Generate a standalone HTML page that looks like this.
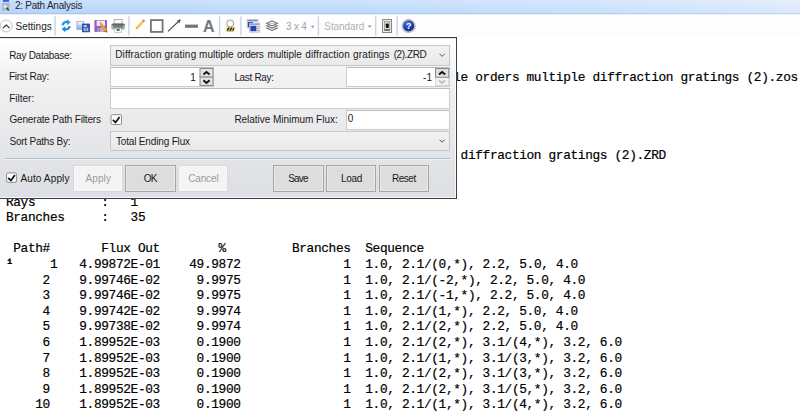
<!DOCTYPE html>
<html><head><meta charset="utf-8"><title>2: Path Analysis</title>
<style>
html,body{margin:0;padding:0;}
body{width:800px;height:412px;overflow:hidden;background:#fff;position:relative;font-family:"Liberation Sans",sans-serif;font-size:10px;color:#1a1a1a;}
.abs{position:absolute;}
#title{position:absolute;left:0;top:0;width:800px;height:15px;background:linear-gradient(to bottom,rgba(255,255,255,.27) 0,rgba(255,255,255,0) 12.5px),linear-gradient(to right,#b7d5fc 0,#b9d7fc 20%,#bedafd 50%,#c8e0fd 75%,#d6e6fc 94%,#dbe9fc 100%);}
#title i{position:absolute;left:0;width:800px;height:1px;}
#toolbar{position:absolute;left:0;top:15px;width:800px;height:22px;background:linear-gradient(#fff,#fcfcfc);}
.sep{position:absolute;top:17px;width:1px;height:18px;background:#c3d3e6;}
#mono{position:absolute;left:-1.4px;top:38.7px;-webkit-text-stroke:0.2px #000;margin:0;font-family:"Liberation Mono",monospace;font-size:12.8px;letter-spacing:-0.347px;line-height:15.6px;color:#000;white-space:pre;}
#panel{position:absolute;left:-1px;top:37px;width:456px;height:160px;border:1px solid #3c3c3c;box-sizing:content-box;background:linear-gradient(#ffffff 0,#fdfdfd 4%,#f2f2f3 24%,#ebebed 51%,#dfe1e5 87%,#dcdfe3 100%);}
#panel .in{position:absolute;left:0;top:0;right:0;bottom:0;border:1px solid rgba(255,255,255,.75);border-left:0;}
.lbl{position:absolute;white-space:nowrap;font-size:10px;line-height:12px;color:#1a1a1a;}
.box{position:absolute;box-sizing:border-box;background:#fff;border:1px solid #c9cdd2;border-top-color:#b9bdc2;}
.combo{position:absolute;box-sizing:border-box;border:1px solid #c6c6c6;background:linear-gradient(#f2f2f2,#e9e9e9);}
.btn{position:absolute;box-sizing:border-box;top:165px;height:27px;border:1px solid #a6a6a6;background:#dddddd;box-shadow:inset 0 0 0 1px rgba(255,255,255,.35);}
.btn.dis{border-color:#d9d9d9;background:#f4f4f4;}
</style></head><body>
<pre id="mono">


                                    Diffraction grating multiple orders multiple diffraction gratings (2).zos




                  Diffraction grating multiple orders multiple diffraction gratings (2).ZRD


 Rays         :   1
 Branches     :   35

  Path#       Flux Out        %         Branches  Sequence
 <b>¹</b>     1   4.99872E-01    49.9872              1  1.0, 2.1/(0,*), 2.2, 5.0, 4.0
      2    9.99746E-02     9.9975              1  1.0, 2.1/(-2,*), 2.2, 5.0, 4.0
      3    9.99746E-02     9.9975              1  1.0, 2.1/(-1,*), 2.2, 5.0, 4.0
      4    9.99742E-02     9.9974              1  1.0, 2.1/(1,*), 2.2, 5.0, 4.0
      5    9.99738E-02     9.9974              1  1.0, 2.1/(2,*), 2.2, 5.0, 4.0
      6    1.89952E-03     0.1900              1  1.0, 2.1/(2,*), 3.1/(4,*), 3.2, 6.0
      7    1.89952E-03     0.1900              1  1.0, 2.1/(1,*), 3.1/(3,*), 3.2, 6.0
      8    1.89952E-03     0.1900              1  1.0, 2.1/(2,*), 3.1/(3,*), 3.2, 6.0
      9    1.89952E-03     0.1900              1  1.0, 2.1/(2,*), 3.1/(5,*), 3.2, 6.0
     10    1.89952E-03     0.1900              1  1.0, 2.1/(1,*), 3.1/(4,*), 3.2, 6.0</pre>
<div id="title"><i style="top:13px;background:rgba(110,140,170,.20)"></i><i style="top:14px;background:rgba(240,243,247,.86)"></i></div>
<div id="toolbar"></div>
<div id="panel"><div class="in"></div><div class="abs" style="left:0;top:0;width:456px;height:1px;background:rgba(0,0,0,.1)"></div></div>
<div class="combo" style="left:110px;top:45px;width:340px;height:21px"></div>
<div class="box" style="left:110px;top:67px;width:104px;height:20px"></div>
<div class="box" style="left:346px;top:67px;width:104px;height:20px"></div>
<div class="box" style="left:110px;top:88px;width:340px;height:21px"></div>
<div class="box" style="left:346px;top:110px;width:104px;height:20px"></div>
<div class="combo" style="left:110px;top:131px;width:340px;height:20px"></div>
<div class="abs" style="left:5px;top:158px;width:445px;height:1px;background:#a8bdd1"></div>
<div class="abs" style="left:5px;top:159px;width:445px;height:1px;background:rgba(255,255,255,.5)"></div>
<div class="btn dis" style="left:73px;width:50px"></div>
<div class="btn" style="left:125px;width:51px"></div>
<div class="btn dis" style="left:178px;width:50px"></div>
<div class="btn" style="left:273px;width:51px"></div>
<div class="btn" style="left:326px;width:50px"></div>
<div class="btn" style="left:379px;width:50px"></div>
<span class="lbl" style="left:14.90px;top:0.00px;letter-spacing:-0.234px;color:#1e2430;">2: Path Analysis</span>
<span class="lbl" style="left:15.45px;top:21.00px;letter-spacing:0.024px;">Settings</span>
<span class="lbl" style="left:286.05px;top:21.00px;letter-spacing:-0.242px;color:#a3a3a3;">3 x 4</span>
<span class="lbl" style="left:324.35px;top:21.00px;letter-spacing:-0.103px;color:#b0b0b0;">Standard</span>
<span class="lbl" style="left:9.15px;top:50.00px;letter-spacing:-0.268px;">Ray Database:</span>
<span class="lbl" style="left:9.00px;top:71.00px;letter-spacing:-0.278px;">First Ray:</span>
<span class="lbl" style="left:9.20px;top:93.00px;letter-spacing:-0.004px;">Filter:</span>
<span class="lbl" style="left:9.50px;top:114.00px;letter-spacing:-0.180px;">Generate Path Filters</span>
<span class="lbl" style="left:9.45px;top:136.00px;letter-spacing:-0.222px;">Sort Paths By:</span>
<span class="lbl" style="left:115.15px;top:49.00px;letter-spacing:0.163px;">Diffraction</span>
<span class="lbl" style="left:164.40px;top:49.00px;letter-spacing:0.206px;">grating</span>
<span class="lbl" style="left:199.05px;top:49.00px;letter-spacing:0.015px;">multiple</span>
<span class="lbl" style="left:237.10px;top:49.00px;letter-spacing:-0.339px;">orders</span>
<span class="lbl" style="left:267.45px;top:49.00px;letter-spacing:-0.014px;">multiple</span>
<span class="lbl" style="left:305.30px;top:49.00px;letter-spacing:0.134px;">diffraction</span>
<span class="lbl" style="left:353.10px;top:49.00px;letter-spacing:0.125px;">gratings</span>
<span class="lbl" style="left:393.70px;top:49.00px;letter-spacing:-0.430px;">(2).ZRD</span>
<span class="lbl" style="left:190.20px;top:72.00px;">1</span>
<span class="lbl" style="left:234.40px;top:72.00px;letter-spacing:-0.333px;">Last Ray:</span>
<span class="lbl" style="left:423.07px;top:72.00px;">-1</span>
<span class="lbl" style="left:234.40px;top:114.00px;letter-spacing:-0.030px;">Relative Minimum Flux:</span>
<span class="lbl" style="left:347.85px;top:113.00px;">0</span>
<span class="lbl" style="left:115.90px;top:136.00px;letter-spacing:-0.157px;">Total Ending Flux</span>
<span class="lbl" style="left:20.40px;top:173.00px;letter-spacing:0.137px;">Auto Apply</span>
<span class="lbl" style="left:85.40px;top:173.00px;letter-spacing:0.146px;color:#9a9a9a;">Apply</span>
<span class="lbl" style="left:143.85px;top:173.00px;letter-spacing:-0.928px;">OK</span>
<span class="lbl" style="left:188.20px;top:173.00px;letter-spacing:-0.141px;color:#9a9a9a;">Cancel</span>
<span class="lbl" style="left:288.25px;top:173.00px;letter-spacing:-0.810px;">Save</span>
<span class="lbl" style="left:341.00px;top:173.00px;letter-spacing:-0.278px;">Load</span>
<span class="lbl" style="left:392.00px;top:173.00px;letter-spacing:-0.474px;">Reset</span>
<svg id="gfx" class="abs" style="left:0;top:0;pointer-events:none" width="800" height="412" viewBox="0 0 800 412">
<!-- separators -->
<rect x="54.40" y="16.4" width="1.4" height="19" fill="#c6d4e6"/>
<rect x="128.20" y="16.4" width="1.4" height="19" fill="#c6d4e6"/>
<rect x="218.90" y="16.4" width="1.4" height="19" fill="#c6d4e6"/>
<rect x="240.20" y="16.4" width="1.4" height="19" fill="#c6d4e6"/>
<rect x="317.70" y="16.4" width="1.4" height="19" fill="#c6d4e6"/>
<rect x="375.00" y="16.4" width="1.4" height="19" fill="#c6d4e6"/>
<rect x="396.50" y="16.4" width="1.4" height="19" fill="#c6d4e6"/>
<!-- settings circle -->
<circle cx="6.3" cy="25.95" r="5.95" fill="#fff" stroke="#bcbcbc" stroke-width="0.9"/>
<path d="M3.3 27.8 L6.25 24.95 L9.2 27.8" fill="none" stroke="#4a4a4a" stroke-width="1.25" stroke-linecap="round" stroke-linejoin="round"/>
<!-- checkboxes -->
<rect x="111" y="114.7" width="10.5" height="9.8" rx="1.3" fill="#fff" stroke="#8c8c8c" stroke-width="1"/>
<path d="M112.9 119.8 L115.5 122.4 L119.6 116.9" fill="none" stroke="#111" stroke-width="1.7" stroke-linejoin="miter"/>
<rect x="6.6" y="172.9" width="9.8" height="9.4" rx="1.3" fill="#fff" stroke="#8c8c8c" stroke-width="1"/>
<path d="M8.2 178 L11 180.5 L14.9 174.9" fill="none" stroke="#111" stroke-width="1.7" stroke-linejoin="miter"/>
<!-- spinner 1 -->
<rect x="200" y="68.5" width="13" height="8.6" fill="#e4e4e4" stroke="#8c8c8c" stroke-width="1"/>
<rect x="200" y="77.1" width="13" height="8.4" fill="#e4e4e4" stroke="#8c8c8c" stroke-width="1"/>
<path d="M203.4 74.6 L206.5 72 L209.6 74.6" fill="none" stroke="#111" stroke-width="1.9"/>
<path d="M203.4 80.3 L206.5 83 L209.6 80.3" fill="none" stroke="#111" stroke-width="1.9"/>
<!-- spinner 2 -->
<rect x="435.5" y="77.3" width="13.2" height="8.2" fill="#f3f3f3" stroke="#d9d9d9" stroke-width="1"/>
<rect x="435.5" y="68.5" width="13.2" height="8.8" fill="#dedede" stroke="#8c8c8c" stroke-width="1"/>
<path d="M439 74.6 L442.1 72 L445.2 74.6" fill="none" stroke="#111" stroke-width="1.9"/>
<path d="M439 80.3 L442.1 83 L445.2 80.3" fill="none" stroke="#bdbdbd" stroke-width="1.7"/>
<!-- combo arrows -->
<path d="M439.5 53.8 L442.1 56.4 L444.7 53.8" fill="none" stroke="#555" stroke-width="1"/>
<path d="M439.5 139.6 L442.1 142.2 L444.7 139.6" fill="none" stroke="#555" stroke-width="1"/>
<!--ICONS_START-->
<defs>
<linearGradient id="gBlue" x1="0" y1="0" x2="0" y2="1"><stop offset="0" stop-color="#4db4f7"/><stop offset="1" stop-color="#1580dc"/></linearGradient>
<linearGradient id="gPrn" x1="0" y1="0" x2="0" y2="1"><stop offset="0" stop-color="#5a5a5a"/><stop offset="1" stop-color="#a2a2a2"/></linearGradient>
<radialGradient id="gHelp" cx="0.4" cy="0.3" r="0.8"><stop offset="0" stop-color="#4a78e0"/><stop offset="0.6" stop-color="#1a3cae"/><stop offset="1" stop-color="#0c2480"/></radialGradient>
<linearGradient id="gDoc" x1="0" y1="0" x2="0" y2="1"><stop offset="0" stop-color="#ffffff"/><stop offset="1" stop-color="#6fa6ea"/></linearGradient>
</defs>
<!-- title icon -->
<rect x="2.9" y="0" width="6.1" height="1.8" fill="#3350ff"/>
<rect x="2.2" y="3" width="7.3" height="7.7" fill="#b4b4b4"/>
<circle cx="5.2" cy="6.5" r="1.7" fill="#d8e8ee"/>
<path d="M6.5 7.8 L8.8 10.2" stroke="#3a3a3a" stroke-width="1.4"/>
<!-- refresh -->
<g id="rf">
<path d="M62.7 25.3 C62.9 22.6 65.2 21.7 67.6 22" fill="none" stroke="#2795ea" stroke-width="2.3"/>
<path d="M67 19.2 L70.7 22.3 L67 25.2 Z" fill="#2795ea"/>
</g>
<g transform="rotate(180 66.15 25.7)">
<path d="M62.7 25.3 C62.9 22.6 65.2 21.7 67.6 22" fill="none" stroke="#1c86e0" stroke-width="2.3"/>
<path d="M67 19.2 L70.7 22.3 L67 25.2 Z" fill="#1c86e0"/>
</g>
<!-- copy -->
<rect x="76.9" y="21.6" width="6.8" height="7.8" fill="url(#gDoc)" stroke="#a9b4c4" stroke-width="0.9"/>
<rect x="82.4" y="24" width="7" height="7.8" fill="#2c4fb4" stroke="#20409c" stroke-width="0.8"/>
<rect x="83.6" y="25.2" width="3.2" height="1.6" fill="#dfe8fa"/>
<rect x="83.6" y="27.8" width="4.6" height="3.2" fill="#b4c8f0"/>
<path d="M85.1 27.8 V31 M86.7 27.8 V31" stroke="#2c4fb4" stroke-width="0.6"/>
<!-- save -->
<rect x="94.4" y="20" width="12.6" height="12" rx="0.8" fill="#9a5cc4"/>
<rect x="96.6" y="20.6" width="8.4" height="5.3" fill="#efe9f8"/>
<rect x="97.4" y="27.8" width="6.4" height="4.2" fill="#b9aecb"/>
<rect x="98.4" y="28.4" width="1.6" height="3" fill="#8a7ea0"/>
<path d="M100.6 23.4 L106.3 31.2" stroke="#f0a21c" stroke-width="2.6" stroke-linecap="butt"/>
<path d="M99.6 22.2 L101.4 22.9 L100 24.2 Z" fill="#8a8a8a"/>
<circle cx="106.5" cy="31.5" r="0.9" fill="#e03020"/>
<!-- printer -->
<rect x="114.2" y="19.5" width="7.8" height="4.6" fill="#fdfdfd" stroke="#a8a8a8" stroke-width="0.9"/>
<rect x="111.3" y="23.6" width="13.8" height="6" rx="1.6" fill="url(#gPrn)"/>
<rect x="111.3" y="25.2" width="1.4" height="3.6" fill="#d0d0d0"/>
<rect x="123.5" y="25.2" width="1.6" height="3.6" fill="#d6d6d6"/>
<circle cx="124.2" cy="26.8" r="0.7" fill="#58c048"/>
<rect x="114.6" y="28.4" width="7" height="4.2" fill="#fafafa" stroke="#b8b8b8" stroke-width="0.7"/>
<rect x="116.6" y="28.9" width="3" height="1.9" fill="#1464c0"/>
<rect x="118.2" y="28.9" width="1" height="1.9" fill="#20a060"/>
<!-- pencil -->
<path d="M136.6 28.4 L143.2 21.2" stroke="#f4c24c" stroke-width="2.4"/>
<path d="M135.6 29.5 L136 27.7 L137.4 29 Z" fill="#caa060"/>
<circle cx="143.6" cy="20.8" r="1.2" fill="#e8707e"/>
<!-- square -->
<rect x="150.9" y="20.1" width="11.7" height="11.8" fill="#fdfdfd" stroke="#747474" stroke-width="1.8"/>
<!-- arrow -->
<path d="M168 31.4 L180 20" stroke="#4a4a4a" stroke-width="1.1"/>
<path d="M180.8 19.2 L179.6 23.2 L176.8 20.4 Z" fill="#5a5a5a"/>
<!-- line -->
<rect x="185" y="24.6" width="13" height="3.2" fill="#767676"/>
<!-- lock -->
<circle cx="230.2" cy="23.4" r="3.3" fill="#fdfdfd" stroke="#b4b4b4" stroke-width="1.3"/>
<rect x="226.6" y="27.5" width="7.2" height="3.3" fill="#e6b400"/>
<path d="M227.6 27.5 l1.4 0 l-1.6 3.3 l-1.4 0 Z M230.4 27.5 l1.4 0 l-1.6 3.3 l-1.4 0 Z M233.2 27.5 l0.6 0 l0 1.2 l-1 2.1 l-1.2 0 Z" fill="#222" transform="translate(0.6 0)"/>
<rect x="226.6" y="30.9" width="7.2" height="0.7" fill="#9a9a9a"/>
<!-- windows -->
<rect x="247" y="19.5" width="11" height="8.6" fill="#ececec" stroke="#c4c4c4" stroke-width="0.7"/>
<rect x="247.4" y="19.9" width="10.2" height="1.4" fill="#6a8cd8"/>
<rect x="247.8" y="22" width="5" height="5.4" fill="#2a40b4"/>
<rect x="249.4" y="23.2" width="10.4" height="9" fill="#f0f0f0" stroke="#bdbdbd" stroke-width="0.7"/>
<rect x="249.8" y="23.6" width="9.6" height="1.3" fill="#7a98dc"/>
<rect x="250.4" y="25.8" width="6" height="5.4" fill="#2a40b4"/>
<rect x="257.2" y="26" width="1.8" height="1.2" fill="#a8a8a8"/><rect x="257.2" y="28" width="1.8" height="1.2" fill="#a8a8a8"/><rect x="257.2" y="30" width="1.8" height="1.2" fill="#a8a8a8"/>
<!-- layers -->
<path d="M272 20.9 L277.8 23.4 L272 25.9 L266.2 23.4 Z" fill="#fff" stroke="#555" stroke-width="0.9"/>
<path d="M266.2 25.6 L272 28.1 L277.8 25.6 M266.2 28 L272 30.5 L277.8 28" fill="none" stroke="#555" stroke-width="0.9"/>
<path d="M266 23.4 H278 M266 25.6 H278 M266 28 H278" stroke="#777" stroke-width="0.5"/>
<!-- dropdown arrows -->
<path d="M310.8 25.8 H314.4 L312.6 27.9 Z" fill="#8e8e8e"/>
<path d="M367.8 25.6 H371.6 L369.7 27.8 Z" fill="#8e8e8e"/>
<!-- switch icon -->
<rect x="382.6" y="19.6" width="9" height="12.8" fill="#f4f4f4" stroke="#747474" stroke-width="0.9"/>
<rect x="384.4" y="21.4" width="5.4" height="9.2" fill="#dcdcdc" stroke="#8a8a8a" stroke-width="0.7"/>
<rect x="385.8" y="23.4" width="3" height="4.6" rx="0.9" fill="#111"/>
<rect x="384.6" y="29.4" width="5" height="1" fill="#333"/>
<!-- help -->
<circle cx="408.6" cy="25.9" r="6.7" fill="#cfcfcf" stroke="#a4a4a4" stroke-width="0.6"/>
<circle cx="408.6" cy="25.9" r="5.6" fill="url(#gHelp)"/>
<text x="408.7" y="29.1" font-family="Liberation Sans, sans-serif" font-weight="bold" font-size="9" fill="#fff" text-anchor="middle">?</text>
<!-- A -->
<text x="208.8" y="31.5" font-family="Liberation Sans, sans-serif" font-weight="bold" font-size="16" fill="#767676" text-anchor="middle">A</text>
<!--ICONS_END-->
</svg>
</body></html>
